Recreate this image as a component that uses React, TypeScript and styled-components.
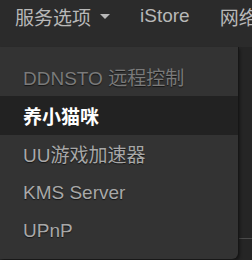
import { FC } from 'react';
import styled, { createGlobalStyle } from 'styled-components';

const GlobalStyle = createGlobalStyle`
  html, body {
    margin: 0;
    padding: 0;
    background: #252525;
    font-family: "Liberation Sans", "Noto Sans CJK SC", sans-serif;
    overflow: hidden;
  }
`;

const Page = styled.div`
  position: relative;
  width: 252px;
  height: 260px;
  background: #252525;
`;

const NavBar = styled.div`
  display: flex;
  align-items: center;
  height: 47px;
  padding-left: 15px;
  gap: 30px;
  background: #2b2b2b;
  white-space: nowrap;
`;

const NavItem = styled.div`
  display: flex;
  align-items: center;
  gap: 9px;
  font-size: 19px;
  color: #b8b8b8;
  margin-top: -15px;
`;

const Caret = styled.span`
  width: 0;
  height: 0;
  border-left: 5px solid transparent;
  border-right: 5px solid transparent;
  border-top: 5px solid #b8b8b8;
`;

const Content = styled.div`
  padding-top: 191px;
`;

const Divider = styled.div`
  height: 1px;
  background: #4a4a4a;
`;

const Menu = styled.ul`
  position: absolute;
  left: 0;
  top: 47px;
  width: 238px;
  margin: 0;
  padding: 10px 0 8px;
  list-style: none;
  background: #333333;
  border-radius: 0 0 6px 0;
  box-shadow: 1px 0 0 #161616, 2px 2px 3px rgba(0, 0, 0, 0.4);
`;

const MenuItem = styled.li<{ $active?: boolean; $dim?: boolean }>`
  height: 38.75px;
  display: flex;
  align-items: center;
  padding-left: 23px;
  font-size: 19px;
  white-space: nowrap;
  font-weight: ${p => (p.$active ? 700 : 400)};
  color: ${p => (p.$active ? '#ffffff' : p.$dim ? '#7a7a7a' : '#a8a8a8')};
  background: ${p => (p.$active ? '#222222' : 'transparent')};
  text-shadow: ${p => (p.$active ? 'none' : '0 1px 1px rgba(0, 0, 0, 0.6)')};
`;

const items = [
  { name: 'DDNSTO 远程控制', dim: true },
  { name: '养小猫咪', active: true },
  { name: 'UU游戏加速器' },
  { name: 'KMS Server' },
  { name: 'UPnP' },
];

const App: FC = () => (
  <Page>
    <GlobalStyle />
    <NavBar>
      <NavItem>
        服务选项
        <Caret />
      </NavItem>
      <NavItem>iStore</NavItem>
      <NavItem>网络</NavItem>
    </NavBar>
    <Content>
      <Divider />
    </Content>
    <Menu>
      {items.map(item => (
        <MenuItem key={item.name} $active={item.active} $dim={item.dim}>
          {item.name}
        </MenuItem>
      ))}
    </Menu>
  </Page>
);

export default App;
